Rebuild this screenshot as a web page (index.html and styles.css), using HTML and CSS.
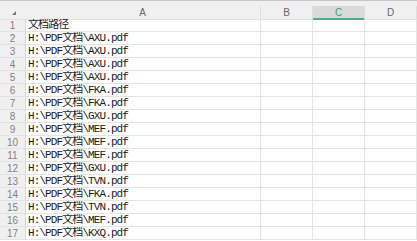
FILE: index.html
```html
<!DOCTYPE html>
<html lang="zh">
<head>
    <meta charset="UTF-8">
    <title>文档路径</title>
    <link rel="stylesheet" href="styles.css">
</head>
<body>
    <div class="topline"></div>
    <div class="sheet">
        <div class="head corner"><span class="tri"></span></div>
        <div class="head">A</div>
        <div class="head">B</div>
        <div class="head active">C</div>
        <div class="head">D</div>

        <div class="num">1</div><div class="cell">文档路径</div><div class="cell"></div><div class="cell"></div><div class="cell"></div>
        <div class="num">2</div><div class="cell">H:\PDF文档\AXU.pdf</div><div class="cell"></div><div class="cell"></div><div class="cell"></div>
        <div class="num">3</div><div class="cell">H:\PDF文档\AXU.pdf</div><div class="cell"></div><div class="cell"></div><div class="cell"></div>
        <div class="num">4</div><div class="cell">H:\PDF文档\AXU.pdf</div><div class="cell"></div><div class="cell"></div><div class="cell"></div>
        <div class="num">5</div><div class="cell">H:\PDF文档\AXU.pdf</div><div class="cell"></div><div class="cell"></div><div class="cell"></div>
        <div class="num">6</div><div class="cell">H:\PDF文档\FKA.pdf</div><div class="cell"></div><div class="cell"></div><div class="cell"></div>
        <div class="num">7</div><div class="cell">H:\PDF文档\FKA.pdf</div><div class="cell"></div><div class="cell"></div><div class="cell"></div>
        <div class="num">8</div><div class="cell">H:\PDF文档\GXU.pdf</div><div class="cell"></div><div class="cell"></div><div class="cell"></div>
        <div class="num">9</div><div class="cell">H:\PDF文档\MEF.pdf</div><div class="cell"></div><div class="cell"></div><div class="cell"></div>
        <div class="num">10</div><div class="cell">H:\PDF文档\MEF.pdf</div><div class="cell"></div><div class="cell"></div><div class="cell"></div>
        <div class="num">11</div><div class="cell">H:\PDF文档\MEF.pdf</div><div class="cell"></div><div class="cell"></div><div class="cell"></div>
        <div class="num">12</div><div class="cell">H:\PDF文档\GXU.pdf</div><div class="cell"></div><div class="cell"></div><div class="cell"></div>
        <div class="num">13</div><div class="cell">H:\PDF文档\TVN.pdf</div><div class="cell"></div><div class="cell"></div><div class="cell"></div>
        <div class="num">14</div><div class="cell">H:\PDF文档\FKA.pdf</div><div class="cell"></div><div class="cell"></div><div class="cell"></div>
        <div class="num">15</div><div class="cell">H:\PDF文档\TVN.pdf</div><div class="cell"></div><div class="cell"></div><div class="cell"></div>
        <div class="num">16</div><div class="cell">H:\PDF文档\MEF.pdf</div><div class="cell"></div><div class="cell"></div><div class="cell"></div>
        <div class="num">17</div><div class="cell">H:\PDF文档\KXQ.pdf</div><div class="cell"></div><div class="cell"></div><div class="cell"></div>
    </div>
</body>
</html>
```

FILE: styles.css
```css
body { margin: 0; background: white; overflow: hidden; }

.topline { height: 1px; background: #c6c6c6; }

.sheet {
    display: grid;
    grid-template-columns: 25px 236px 52px 52px 1fr;
    grid-auto-rows: 13px;
    padding-top: 5px;
    background: linear-gradient(#f0f0f0, #f0f0f0) top / 100% 5px no-repeat, white;
}

/* column headers */
.head {
    height: 14px;
    box-sizing: border-box;
    background: #f0f0f0;
    border-right: 1px solid #dedede;
    border-bottom: 1px solid #e2e2e2;
    font-family: "Liberation Sans", Arial, sans-serif;
    font-size: 10px;
    line-height: 13px;
    color: #666;
    text-align: center;
}
.head.corner { position: relative; border-right: none; }
.head.active {
    background: #dadada;
    color: #3b9b70;
    border-bottom: 2px solid #4cae86;
}
.tri {
    position: absolute;
    left: 12px;
    top: 5px;
    width: 0;
    height: 0;
    border-left: 4px solid transparent;
    border-bottom: 4px solid #777;
}

/* row numbers */
.num {
    box-sizing: border-box;
    background: #f0f0f0;
    border-bottom: 1px solid #e2e2e2;
    font-family: "Liberation Sans", Arial, sans-serif;
    font-size: 10px;
    line-height: 13px;
    color: #808080;
    text-align: center;
}

/* cells */
.cell {
    box-sizing: border-box;
    border-right: 1px solid #e4e4e4;
    border-bottom: 1px solid #e4e4e4;
    padding-left: 2px;
    font-family: "Liberation Mono", "Noto Sans CJK SC", monospace;
    font-size: 11px;
    letter-spacing: -0.9px;
    line-height: 12px;
    color: #1a1a1a;
    white-space: nowrap;
    overflow: hidden;
}
.num + .cell { border-left: 1px solid #d8d8d8; }
```
